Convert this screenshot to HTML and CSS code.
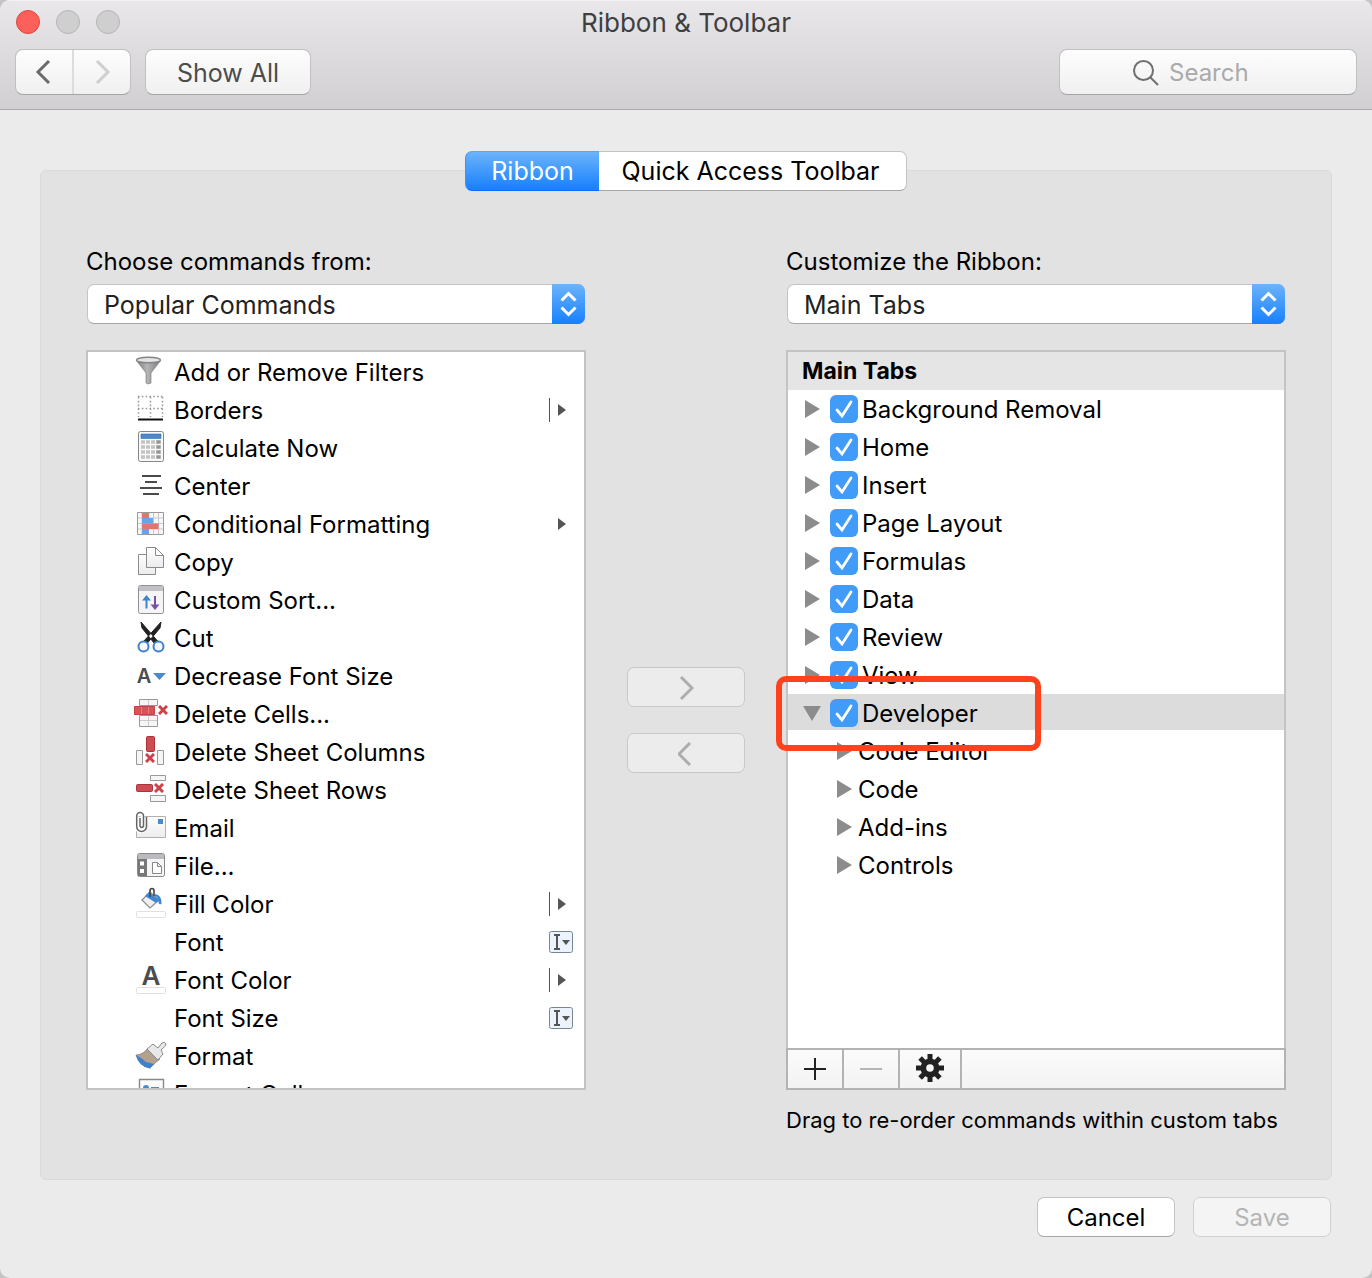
FILE: index.html
```html
<!DOCTYPE html>
<html lang="en">
<head>
<meta charset="utf-8">
<title>Ribbon &amp; Toolbar</title>
<link rel="stylesheet" href="styles.css">
</head>
<body>
<svg class="defs" aria-hidden="true">
  <defs>
    <linearGradient id="metal" x1="0" x2="1" y1="0" y2="0"><stop offset="0" stop-color="#77777a"/><stop offset=".45" stop-color="#b5b5b8"/><stop offset="1" stop-color="#77777a"/></linearGradient>
    <linearGradient id="paper" x1="0" x2="0" y1="0" y2="1"><stop offset="0" stop-color="#fff"/><stop offset="1" stop-color="#ececec"/></linearGradient>
    <symbol id="split" viewBox="0 0 24 38"><path d="M.5 7v24" stroke="#555"/><path d="M9 13l8 6-8 6z" fill="#555"/></symbol>
    <symbol id="submenu" viewBox="0 0 24 38"><path d="M9 13l8 6-8 6z" fill="#555"/></symbol>
    <symbol id="combo" viewBox="0 0 24 38"><rect x=".5" y="8.500" width="23" height="21" rx="2" fill="#edf3fd" stroke="#76859a"/><path d="M5 12h6M5 26h6M8 12v14" stroke="#555" stroke-width="2" fill="none"/><path d="M13 17h8l-4 5z" fill="#555"/></symbol>
    <symbol id="cross" viewBox="0 0 10 10"><path d="M1 1l8 8M9 1l-8 8" stroke="#cf4148" stroke-width="3"/></symbol>
    <symbol id="tri" viewBox="0 0 16 18"><path d="M1 0l15 9-15 9z" fill="#8c8c8c"/></symbol>
    <symbol id="updown" viewBox="0 0 33 40"><path d="M9.500 16.500l7-7 7 7M9.500 23.500l7 7 7-7" fill="none" stroke="#fff" stroke-width="3"/></symbol>
  </defs>
</svg>

<div class="window">
  <header class="titlebar">
    <div class="title-row">
      <div class="lights">
        <button class="light close" aria-label="Close"></button>
        <button class="light" aria-label="Minimize" disabled></button>
        <button class="light" aria-label="Zoom" disabled></button>
      </div>
      <h1 class="title">Ribbon &amp; Toolbar</h1>
    </div>
    <div class="toolbar">
      <div class="nav">
        <button class="nav-button" aria-label="Back"><svg width="18" height="26" viewBox="0 0 18 26"><path d="M14 2L3 13l11 11" fill="none" stroke="#6b6b6b" stroke-width="3"/></svg></button>
        <button class="nav-button" aria-label="Forward" disabled><svg width="18" height="26" viewBox="0 0 18 26"><path d="M4 2l11 11L4 24" fill="none" stroke="#cfcfcf" stroke-width="3"/></svg></button>
      </div>
      <button class="show-all">Show All</button>
      <label class="search">
        <svg width="26" height="26" viewBox="0 0 26 26" fill="none" stroke="#6f6f6f" stroke-width="2"><circle cx="10.500" cy="10.500" r="9.500"/><path d="M17 17l8 8"/></svg>
        <input class="search-input" type="text" placeholder="Search" aria-label="Search">
      </label>
    </div>
  </header>

  <main class="content">
    <section class="panel">
      <div class="tabs" role="tablist">
        <button class="tab active" role="tab" aria-selected="true">Ribbon</button>
        <button class="tab" role="tab" aria-selected="false">Quick Access Toolbar</button>
      </div>
      <div class="editor">
        <div class="chooser from">
          <label for="source">Choose commands from:</label>
          <div class="select-box">
            <select id="source"><option>Popular Commands</option></select>
            <svg class="stepper" width="33" height="40"><use href="#updown"/></svg>
          </div>
        </div>

        <ul class="commands">
          <li class="command"><svg class="icon" viewBox="0 0 38 38"><path d="M4 7l10 13v10q2 2 5 0V20L29 7z" fill="url(#metal)" stroke="#77777a" stroke-width=".6"/><ellipse cx="16.500" cy="7" rx="12" ry="2.800" fill="#e4e4e4" stroke="#858588" stroke-width="1.400"/></svg><span>Add or Remove Filters</span></li>
          <li class="command"><svg class="icon" viewBox="0 0 38 38"><g fill="none" stroke="#999" stroke-width="1.500" stroke-dasharray="1.600 2.200"><path d="M6 5.500h25M6 17.500h25M6.500 6v20M18.500 6v20M30.500 6v20"/></g><path d="M6 28.500h25" stroke="#111" stroke-width="2"/></svg><span>Borders</span><svg class="hint-icon" width="24" height="38"><use href="#split"/></svg></li>
          <li class="command"><svg class="icon" viewBox="0 0 38 38"><rect x="6.500" y="2.500" width="25" height="30" rx="2" fill="#fafafa" stroke="#858585"/><path d="M9 5h20v4.500H9z" fill="#4b87cb" stroke="#376fae" stroke-width=".6"/><path d="M9 13h14M9 18h14M9 23h14M9 28h14" stroke="#c4c4c4" stroke-width="3.400" stroke-dasharray="4 1"/><path d="M26.500 11.300v18.400" stroke="#969696" stroke-width="4.500" stroke-dasharray="3.400 1.600"/></svg><span>Calculate Now</span></li>
          <li class="command"><svg class="icon" viewBox="0 0 38 38"><path d="M10 9h19M13 15h12M8 21h22M11 27h16" stroke="#4a4a4a" stroke-width="1.800"/></svg><span>Center</span></li>
          <li class="command"><svg class="icon" viewBox="0 0 38 38"><path d="M5.500 7.500h26v22h-26z" fill="#f8f8f8" stroke="#9a9a9a"/><path d="M6 13h25M6 18.500h25M6 24h25M10 8v21M21.500 8v21M26.500 8v21" stroke="#c9c9c9"/><path d="M10 8h7v5h-7zM10 18.500h16.500V24H10z" fill="#e57373"/><path d="M10 13h11v5.500H10zM10 24h7v5h-7z" fill="#67a5ea"/></svg><span>Conditional Formatting</span><svg class="hint-icon" width="24" height="38"><use href="#submenu"/></svg></li>
          <li class="command"><svg class="icon" viewBox="0 0 38 38"><path d="M6.500 11.500h17v20h-17z" fill="url(#paper)" stroke="#8b8b8b"/><path d="M14.500 4.500h9l8 8v12h-17z" fill="url(#paper)" stroke="#8b8b8b"/><path d="M23.500 4.500v8h8z" fill="#fff" stroke="#8b8b8b"/></svg><span>Copy</span></li>
          <li class="command"><svg class="icon" viewBox="0 0 38 38"><rect x="6.500" y="4.500" width="25" height="28" rx="2" fill="#f5f5f6" stroke="#909094"/><path d="M7 5h24v5H7z" fill="#c2c2c6"/><path d="M14.500 27.500V16" stroke="#3d86cf" stroke-width="2"/><path d="M10 19.500l4.500-5.500 4.500 5.500z" fill="#3d86cf"/><path d="M23 15v11" stroke="#7b4fa5" stroke-width="2"/><path d="M18.500 23.500L23 29l4.500-5.500z" fill="#7b4fa5"/></svg><span>Custom Sort...</span></li>
          <li class="command"><svg class="icon" viewBox="0 0 38 38"><path d="M9 3l16.500 19-3.500 2L10 9zM29 3L12 22l3.500 2L28 9z" fill="#222" stroke="#222"/><g fill="#f4f9ff" stroke="#3f82cc" stroke-width="2"><circle cx="11.500" cy="27.500" r="5"/><circle cx="26.500" cy="27.500" r="5"/></g></svg><span>Cut</span></li>
          <li class="command"><svg class="icon" viewBox="0 0 38 38"><text class="letter" x="12" y="26" font-size="20">A</text><path d="M21 16h13l-6.500 7z" fill="#4989cf"/></svg><span>Decrease Font Size</span></li>
          <li class="command"><svg class="icon" viewBox="0 0 38 38"><path d="M7.500 4.500h18v6h-18zM7.500 20.500h18v11h-18z" fill="#f6f6f6" stroke="#999"/><path d="M16.500 5v5M8 25.500h17M16.500 21v10" stroke="#ccc"/><path d="M2.500 11.500h20v8h-20z" fill="#dc5157" stroke="#c43f46"/><path d="M9.500 12v7M16.500 12v7" stroke="#e77b80"/><use href="#cross" x="26" y="10" width="10" height="10"/></svg><span>Delete Cells...</span></li>
          <li class="command"><svg class="icon" viewBox="0 0 38 38"><rect x="14.500" y="3.500" width="8" height="15" rx="1" fill="#cd4d54" stroke="#aa343a"/><path d="M4.500 17.500h6v14h-6zM25.500 17.500h6v14h-6z" fill="#f5f5f5" stroke="#999"/><use href="#cross" x="13" y="20" width="10" height="10"/></svg><span>Delete Sheet Columns</span></li>
          <li class="command"><svg class="icon" viewBox="0 0 38 38"><rect x="4.500" y="13.500" width="16" height="7" rx="1" fill="#cd4d54" stroke="#aa343a"/><path d="M18.500 4.500h15v5h-15zM18.500 24.500h15v6h-15z" fill="#f5f5f5" stroke="#999"/><use href="#cross" x="22" y="12" width="10" height="10"/></svg><span>Delete Sheet Rows</span></li>
          <li class="command"><svg class="icon" viewBox="0 0 38 38"><path d="M4.500 7.500h29v21h-29z" fill="url(#paper)" stroke="#b0b0b0"/><path d="M26 10h5v5h-5z" fill="#4989cf"/><path d="M13 8v10a3.500 3.500 0 0 1-8.500 0V7a2.800 2.800 0 0 1 6 0v10a1.500 1.500 0 0 1-3 0V9" fill="none" stroke="#fff" stroke-width="4"/><path d="M14.500 8v9.500a4.800 4.800 0 0 1-9.800 0V7a3.300 3.300 0 0 1 6.800 0v10a1.800 1.800 0 0 1-3.500 0V9" fill="none" stroke="#666" stroke-width="1.500"/></svg><span>Email</span></li>
          <li class="command"><svg class="icon" viewBox="0 0 38 38"><rect x="5.500" y="6.500" width="27" height="23" rx="2" fill="#f5f5f5" stroke="#88888b"/><path d="M6 7h26v5H6z" fill="#bbbbbf"/><path d="M6 12h9v17H6z" fill="#77777a"/><path d="M8 14.500h4v4H8zM8 22h4v4H8z" fill="#fff"/><path d="M20.500 15.500h5l4 4v7h-9zM25.500 15.500v4h4" fill="#fff" stroke="#88888b"/></svg><span>File...</span></li>
          <li class="command"><svg class="icon" viewBox="0 0 38 38"><path d="M10 15l8-8 9 8-9 8z" fill="#f0f0f1" stroke="#8c8c90" stroke-width="1.200"/><path d="M13 11l4-4 10 8-3 3z" fill="#3f87d4"/><path d="M23 9q7 1 6.500 10-3 1-3-2 0-5-3.500-6z" fill="#3f87d4"/><path d="M18 12V6q0-2.500 2-2.500T22 6v5" fill="none" stroke="#444" stroke-width="1.600"/><rect x="4.500" y="26.500" width="29" height="6" rx="1" fill="#fff" stroke="#e0e0e0"/></svg><span>Fill Color</span><svg class="hint-icon" width="24" height="38"><use href="#split"/></svg></li>
          <li class="command"><span class="icon"></span><span>Font</span><svg class="hint-icon" width="24" height="38"><use href="#combo"/></svg></li>
          <li class="command"><svg class="icon" viewBox="0 0 38 38"><text class="letter" x="19" y="24" font-size="26">A</text><rect x="4.500" y="26.500" width="29" height="6" rx="1" fill="#fff" stroke="#e0e0e0"/></svg><span>Font Color</span><svg class="hint-icon" width="24" height="38"><use href="#split"/></svg></li>
          <li class="command"><span class="icon"></span><span>Font Size</span><svg class="hint-icon" width="24" height="38"><use href="#combo"/></svg></li>
          <li class="command"><svg class="icon" viewBox="0 0 38 38"><path d="M4 18q7 0 12-7l12 11q-4 3-10 9Q7 29 4 18z" fill="#b3a18e" stroke="#7f766d" stroke-width=".7"/><path d="M4 18q6 3 10 7 5 1 8 2-2 2-4 4.500Q7 30 4 18z" fill="#3f80cc"/><path d="M15 12l6-5 5 4 4-5q3-2 4 1 0 2-5 6l2 4-5 6z" fill="#e8e8e9" stroke="#8b8b8e"/></svg><span>Format</span></li>
          <li class="command"><svg class="icon" viewBox="0 0 38 38"><path d="M7.500 4.500h24v24h-24z" fill="#fcfcfc" stroke="#88888b" stroke-width="1.400"/><circle cx="14" cy="13" r="3" fill="#4989cf"/><path d="M19 13h8" stroke="#4989cf" stroke-width="2"/></svg><span>Format Cells...</span></li>
        </ul>

        <div class="transfer">
          <button class="small-button" aria-label="Add" disabled><svg width="16" height="24" viewBox="0 0 16 24"><path d="M3 1l11 11L3 23" fill="none" stroke="#adadad" stroke-width="3"/></svg></button>
          <button class="small-button" aria-label="Remove" disabled><svg width="16" height="24" viewBox="0 0 16 24"><path d="M12 1L1 12l11 11" fill="none" stroke="#adadad" stroke-width="3"/></svg></button>
        </div>

        <div class="chooser to">
          <label for="target">Customize the Ribbon:</label>
          <div class="select-box">
            <select id="target"><option>Main Tabs</option></select>
            <svg class="stepper" width="33" height="40"><use href="#updown"/></svg>
          </div>
        </div>

        <div class="tree-box">
          <h2 class="tree-title">Main Tabs</h2>
          <ul class="tree">
            <li class="node"><svg class="tri"><use href="#tri"/></svg><label><input type="checkbox" checked><span>Background Removal</span></label></li>
            <li class="node"><svg class="tri"><use href="#tri"/></svg><label><input type="checkbox" checked><span>Home</span></label></li>
            <li class="node"><svg class="tri"><use href="#tri"/></svg><label><input type="checkbox" checked><span>Insert</span></label></li>
            <li class="node"><svg class="tri"><use href="#tri"/></svg><label><input type="checkbox" checked><span>Page Layout</span></label></li>
            <li class="node"><svg class="tri"><use href="#tri"/></svg><label><input type="checkbox" checked><span>Formulas</span></label></li>
            <li class="node"><svg class="tri"><use href="#tri"/></svg><label><input type="checkbox" checked><span>Data</span></label></li>
            <li class="node"><svg class="tri"><use href="#tri"/></svg><label><input type="checkbox" checked><span>Review</span></label></li>
            <li class="node"><svg class="tri"><use href="#tri"/></svg><label><input type="checkbox" checked><span>View</span></label></li>
            <li class="node selected"><svg class="tri open"><use href="#tri"/></svg><label><input type="checkbox" checked><span>Developer</span></label><i class="callout"></i></li>
            <li class="node child"><svg class="tri"><use href="#tri"/></svg><span>Code Editor</span></li>
            <li class="node child"><svg class="tri"><use href="#tri"/></svg><span>Code</span></li>
            <li class="node child"><svg class="tri"><use href="#tri"/></svg><span>Add-ins</span></li>
            <li class="node child"><svg class="tri"><use href="#tri"/></svg><span>Controls</span></li>
          </ul>
          <div class="tree-actions">
            <button class="action" aria-label="Add tab"><svg width="24" height="24" viewBox="0 0 24 24"><path d="M1 12h22M12 1v22" stroke="#222" stroke-width="2"/></svg></button>
            <button class="action" aria-label="Remove tab" disabled><svg width="24" height="24" viewBox="0 0 24 24"><path d="M1 12h22" stroke="#b5b5b5" stroke-width="2"/></svg></button>
            <button class="action gear" aria-label="Options"><svg width="28" height="30" viewBox="-14 -14 28 30"><g fill="#222"><path id="cog" d="M-2.500-14h5v28h-5z"/><use href="#cog" transform="rotate(45)"/><use href="#cog" transform="rotate(90)"/><use href="#cog" transform="rotate(135)"/><circle r="9.500"/></g><circle r="3.800" fill="#f7f7f7"/></svg></button>
          </div>
        </div>
        <p class="note">Drag to re-order commands within custom tabs</p>
      </div>
    </section>
  </main>

  <footer class="footer">
    <button class="push">Cancel</button>
    <button class="push" disabled>Save</button>
  </footer>
</div>
</body>
</html>
```
FILE: styles.css
```css
* { box-sizing: border-box; }

body {
  margin: 0;
  background: #c4c4c4;
  color: #000;
  font: 24px/30px Inter, "Liberation Sans", sans-serif;
}

button, input, select {
  margin: 0;
  padding: 0;
  font: inherit;
  color: inherit;
}

ul, h1, h2, p { margin: 0; padding: 0; }
ul { list-style: none; }
svg { display: block; flex: none; }

.defs { position: absolute; width: 0; height: 0; }

.window {
  display: flex;
  flex-direction: column;
  height: 100vh;
  min-height: 1000px;
  min-width: 1000px;
  overflow: hidden;
  background: #ebebeb;
  border-radius: 10px;
}

/* Title bar */
.titlebar {
  padding-bottom: 14px;
  background: linear-gradient(#e9e7ea, #d1cfd2);
  border-top: 1px solid #f4f3f4;
  border-bottom: 1px solid #aaa8ab;
}

.title-row {
  display: grid;
  grid-template-columns: 1fr auto 1fr;
  align-items: center;
  height: 42px;
  padding: 0 16px;
}

.lights { display: flex; gap: 16px; }

.light {
  width: 24px;
  height: 24px;
  border: 1px solid #b4b3b5;
  border-radius: 50%;
  background: #cfcfcf;
}

.light.close { background: #fc605b; border-color: #e0443e; }

.title {
  padding-top: 2px;
  font-size: 26px;
  font-weight: 400;
  color: #3f3f3f;
}

.toolbar { display: flex; padding: 6px 15px 0; }

.nav, .show-all, .search {
  height: 46px;
  border: 1px solid #c1bfc2;
  border-bottom-color: #a5a3a6;
  border-radius: 8px;
  background: linear-gradient(#fdfdfd, #f0f0f0);
}

.nav { display: flex; width: 116px; }

.nav-button {
  display: grid;
  flex: 1;
  place-items: center;
  border: 0;
  background: none;
}

.nav-button + .nav-button { border-left: 2px solid #dcdcdc; }

.show-all {
  width: 166px;
  margin-left: 14px;
  padding-top: 2px;
  font-size: 25px;
  color: #4c4c4c;
}

.search {
  display: flex;
  align-items: center;
  justify-content: center;
  gap: 10px;
  width: 298px;
  margin-left: auto;
  padding: 2px 22px 0 0;
}

.search-input {
  width: 92px;
  border: 0;
  outline: 0;
  background: none;
}

.search-input::placeholder { color: #aaa; opacity: 1; }

/* Panel and segmented control */
.content {
  display: flex;
  flex: 1;
  min-height: 0;
  padding: 60px 40px 0;
}

.panel {
  display: flex;
  flex: 1;
  flex-direction: column;
  padding: 0 45px 44px;
  background: #e2e2e2;
  border: 1px solid #dadada;
  border-radius: 6px;
}

.tabs {
  display: flex;
  align-self: center;
  height: 40px;
  margin-top: -20px;
  border-radius: 7px;
}

.tab {
  width: 308px;
  padding-right: 4px;
  border: 1px solid #c4c4c4;
  border-bottom-color: #a6a6a6;
  border-left: 0;
  border-radius: 0 7px 7px 0;
  background: #fff;
  font-size: 25px;
}

.tab.active {
  width: 134px;
  padding: 0;
  border: 1px solid #3b94f7;
  border-top-color: #5aa5ef;
  border-right: 0;
  border-bottom-color: #0d6bff;
  border-radius: 7px 0 0 7px;
  background: linear-gradient(#6cb3fa, #1680ff);
  color: #fff;
}

.editor {
  display: grid;
  flex: 1;
  grid-template-columns: 1fr 200px 1fr;
  grid-template-rows: auto minmax(0, 1fr) auto;
  min-height: 0;
  padding-top: 56px;
}

.from, .commands { grid-column: 1; }
.transfer { grid-column: 2; }
.to, .tree-box, .note { grid-column: 3; }
.from, .to { grid-row: 1; }
.commands, .transfer, .tree-box { grid-row: 2; }
.note { grid-row: 3; }

.chooser { padding-bottom: 26px; }
.chooser label { display: block; margin-bottom: 7px; }

.select-box { position: relative; margin: 0 1px; }

.select-box select {
  display: block;
  width: 100%;
  height: 40px;
  padding: 1px 48px 0 16px;
  appearance: none;
  border: 1px solid #c4c4c4;
  border-bottom-color: #a6a6a6;
  border-radius: 7px;
  background: #fff;
  font-size: 25px;
  color: #222;
}

.stepper {
  position: absolute;
  top: 0;
  right: 0;
  border-radius: 0 7px 7px 0;
  background: linear-gradient(#6cb3fa, #1680ff);
  pointer-events: none;
}

/* Command list */
.commands {
  overflow: hidden;
  padding-top: 1px;
  border: 2px solid #c3c3c3;
  background: #fff;
}

.command {
  display: flex;
  align-items: center;
  height: 38px;
  padding: 0 11px 0 44px;
}

.command span, .node span { padding-top: 2px; }

.icon { width: 38px; height: 38px; margin-right: 4px; }
.hint-icon { margin-left: auto; }

.letter {
  fill: #4c4c4c;
  font-weight: 600;
  text-anchor: middle;
}

.transfer {
  display: flex;
  flex-direction: column;
  align-items: center;
  justify-content: center;
  gap: 26px;
}

.small-button, .push {
  display: grid;
  place-items: center;
  height: 40px;
  padding-top: 2px;
  border: 1px solid #c4c4c4;
  border-bottom-color: #a6a6a6;
  border-radius: 7px;
  background: #fff;
}

.small-button { width: 118px; }

.small-button:disabled, .push:disabled {
  border-color: #d0d0d0;
  background: #f4f4f4;
  color: #b5b5b5;
}

.small-button:disabled { border-color: #c8c8c8; background: #ececec; }

/* Tab tree */
.tree-box {
  display: flex;
  flex-direction: column;
  border: 2px solid #c3c3c3;
  background: #fff;
}

.tree-title {
  height: 38px;
  padding-left: 14px;
  background: #e5e5e5;
  font-size: 23px;
  font-weight: 700;
  line-height: 38px;
}

.tree { flex: 1; }

.node {
  position: relative;
  display: flex;
  align-items: center;
  height: 36px;
  margin-bottom: 2px;
  padding: 2px 16px 0;
}

.node label { display: flex; align-items: center; }
.node.selected { z-index: 1; background: #dcdcdc; }
.node.child { padding-left: 48px; }
.node.child .tri { margin-right: 6px; }

.tri { width: 16px; height: 18px; margin-right: 10px; }
.tri.open { transform: rotate(90deg); }

.node input {
  width: 28px;
  height: 28px;
  margin-right: 4px;
  appearance: none;
  border-radius: 6px;
  background: #419bf9 url("data:image/svg+xml,%3Csvg xmlns='http://www.w3.org/2000/svg' viewBox='0 0 28 28'%3E%3Cpath d='M7 15l5 6 9-14' fill='none' stroke='white' stroke-width='2.800' stroke-linecap='round'/%3E%3C/svg%3E");
}

.callout {
  position: absolute;
  top: -18px;
  left: -12px;
  width: 265px;
  height: 75px;
  border: 6px solid #ff421d;
  border-radius: 10px;
}

.tree-actions {
  display: flex;
  height: 42px;
  margin: 0 -2px -2px;
  border: 2px solid #b3b3b3;
  background: linear-gradient(#fbfbfb, #f3f3f3);
}

.action {
  display: grid;
  place-items: center;
  width: 56px;
  border: 0;
  border-right: 2px solid #b3b3b3;
  background: none;
}

.action.gear { width: 62px; }

.note { padding-top: 15px; font-size: 22px; white-space: nowrap; }

/* Footer buttons */
.footer {
  display: flex;
  justify-content: flex-end;
  gap: 18px;
  padding: 17px 41px 41px;
}

.push { width: 138px; }
```
